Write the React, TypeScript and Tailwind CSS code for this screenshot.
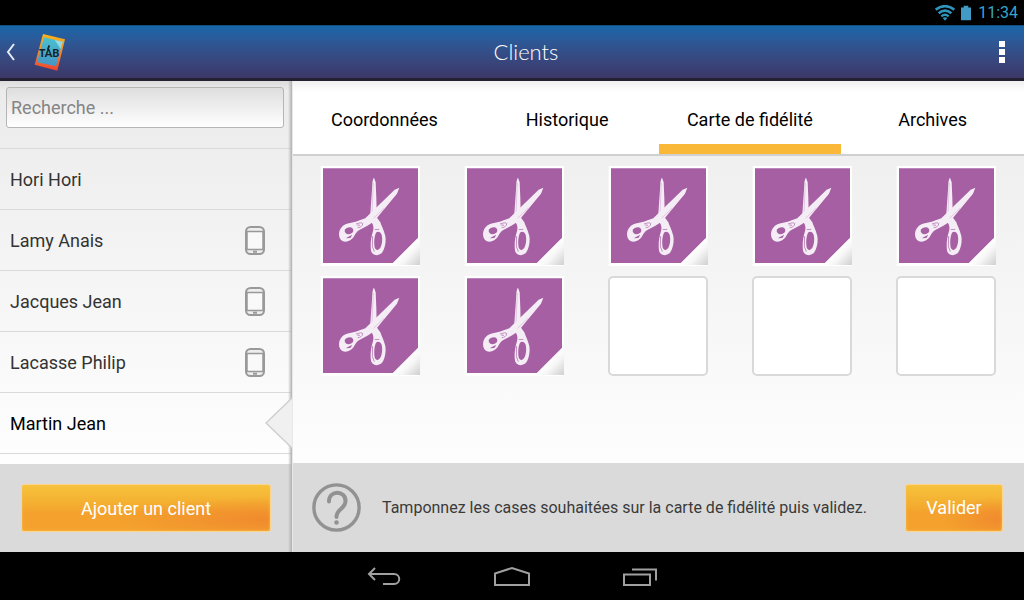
import { useState } from "react";

const clients = [
  { name: "Hori Hori", phone: false },
  { name: "Lamy Anais", phone: true },
  { name: "Jacques Jean", phone: true },
  { name: "Lacasse Philip", phone: true },
  { name: "Martin Jean", phone: false },
];

const tabs = ["Coordonnées", "Historique", "Carte de fidélité", "Archives"];

function StatusBar() {
  return (
    <div className="flex h-[25px] shrink-0 items-center justify-end bg-black pr-[6px] text-[#33a5d0]">
      <svg className="mr-[6px] h-4 w-5" viewBox="0 0 60 48" fill="none" stroke="#2f93bc" strokeWidth="8">
        <path d="M2 14 Q30 -7 58 14" />
        <path d="M11 25 Q30 9 49 25" />
        <path d="M19 34 Q30 24 41 34" strokeWidth="7" />
        <path d="M23 39 Q30 34 37 39 L30 47 Z" fill="#2f93bc" stroke="none" />
      </svg>
      <svg className="mr-[7px] h-4 w-[10px]" viewBox="0 0 11 16" fill="#429bc4">
        <path d="M3 0h5v2h3v14H0V2h3z" />
      </svg>
      <span className="text-[16px] leading-[25px]">11:34</span>
    </div>
  );
}

function TabLogo() {
  return (
    <svg className="h-[38px] w-[32px]" viewBox="0 0 96 114">
      <defs>
        <linearGradient id="frame" x1="0" y1="0" x2="0" y2="1">
          <stop offset="0" stopColor="#fdb515" />
          <stop offset="0.5" stopColor="#f58a2b" />
          <stop offset="1" stopColor="#ee4030" />
        </linearGradient>
        <linearGradient id="glass" x1="0" y1="0" x2="0" y2="1">
          <stop offset="0" stopColor="#4bc0cf" />
          <stop offset="1" stopColor="#4695c4" />
        </linearGradient>
      </defs>
      <path d="M27 3 L93 19 L70 113 L2 95 Z" fill="url(#frame)" />
      <path d="M30 13 L86 26 L66 100 L9 88 Z" fill="url(#glass)" />
      <path d="M62 21 L86 26 L80 48 Z" fill="#a9e0e8" opacity="0.8" />
      <path d="M41 50 L46 37" stroke="#14222c" strokeWidth="5" />
      <text x="15" y="71" fontFamily="Lato, sans-serif" fontWeight="900" fontSize="32" fill="#14222c">
        TAB
      </text>
    </svg>
  );
}

function PhoneIcon() {
  return (
    <svg className="h-[29px] w-[20px]" viewBox="0 0 20 29" fill="none" stroke="#999" strokeWidth="2">
      <rect x="1" y="1" width="18" height="27" rx="4.5" fill="#eee" />
      <path d="M2 5.500 H18 V23.500 H2 Z" fill="#f9f9f9" strokeWidth="1.500" />
      <path d="M8 25.700 H12" />
    </svg>
  );
}

function Scissors() {
  return (
    <svg className="block h-full w-full" viewBox="30 33 300 300" aria-hidden="true">
      <defs>
        <linearGradient id="fold" gradientUnits="userSpaceOnUse" x1="284" y1="286" x2="330" y2="330">
          <stop offset="0" stopColor="#ffffff" />
          <stop offset="0.35" stopColor="#f6f6f6" />
          <stop offset="1" stopColor="#cfcfcf" />
        </linearGradient>
      </defs>
      <path d="M32 33 H330 V333 H32 Z" fill="#fff" />
      <path d="M39 40 H324 V249 L249 324 H39 Z" fill="#a65fa3" />
      <path d="M330 243 V330 H243 Z" fill="url(#fold)" />
      <g fill="#f5edf6">
        <path d="M192 68 C187 72 187 88 186 104 L180 190 L200 178 L199 130 L197 82 Z" />
        <path d="M268 98 L254 104 L182 174 L166 190 L145 197 C132 203 108 202 96 215 C84 227 84 250 97 258 C110 264 124 256 131 246 C136 238 138 231 148 225 L172 212 L193 199 L208 180 L261 116 Z" />
        <path d="M181 199 C190 207 192 216 189 229 C182 250 180 276 184 290 C190 304 209 303 217 292 C227 277 229 252 225 239 C220 223 214 211 211 202 L200 187 Z" />
      </g>
      <g fill="#a65fa3">
        <ellipse cx="117" cy="227" rx="13" ry="10" transform="rotate(-15 117 227)" />
        <path d="M198 233 C203 227 212 230 215 239 C219 256 215 276 207 283 C199 288 193 282 193 270 C192 258 193 243 198 233 Z" />
        <path d="M107 250 L121 242 L127 240 L121 249 Z" />
      </g>
      <g fill="none" stroke="#b47cb4" strokeWidth="2.500">
        <path d="M138 207 C150 203 160 202 158 207 C157 214 150 218 143 218 M141 210 L150 211" />
        <path d="M194 224 L208 223 M188 243 L187 274 L193 290" />
        <path d="M190 190 L222 160 M190 84 L186 170" strokeWidth="1" />
      </g>
    </svg>
  );
}

const orangeButton =
  "rounded-[3px] border border-[#fbd58c] bg-[radial-gradient(ellipse_at_100%_75%,#f08a2e_0%,#f08a2e00_45%),linear-gradient(#f6c33b,#f4ac30_45%,#f4a22d_60%,#f4a22d)] text-[18px] text-white shadow-[inset_0_0_3px_#f8bd4f]";

export default function App() {
  const [activeTab, setActiveTab] = useState(2);
  const [stamps, setStamps] = useState(7);
  const [selected, setSelected] = useState(4);

  return (
    <div className="flex min-h-screen flex-col bg-black font-[Roboto,sans-serif]">
      <StatusBar />
      <header className="grid h-14 shrink-0 grid-cols-[1fr_auto_1fr] items-center border-t border-b-[3px] border-t-[#124f80] border-b-[#242130] bg-linear-to-b from-[#1766aa] to-[#3c3768]">
        <div className="flex items-center pl-[6px]">
          <button aria-label="Retour" className="flex items-center gap-[19px]">
            <svg className="h-[18px] w-[9px]" viewBox="0 0 9 18" fill="none" stroke="#e8edf5" strokeWidth="2">
              <path d="M8 1 L2 9 L8 17" />
            </svg>
            <TabLogo />
          </button>
        </div>
        <h1 className="pl-7 font-[Lato,sans-serif] text-[22px] leading-6 font-light text-white">Clients</h1>
        <button aria-label="Menu" className="mr-[19px] flex flex-col gap-[2px] justify-self-end">
          <span className="size-[6px] bg-white" />
          <span className="size-[6px] bg-white" />
          <span className="size-[6px] bg-white" />
        </button>
      </header>

      <div className="flex flex-1">
        <aside className="relative flex w-[293px] shrink-0 flex-col border-r border-[#e8e8e8] bg-linear-to-b from-[#ebebeb] to-[#fefefe] to-80%">
          <div className="bg-linear-to-b from-[#dcdcdc] to-transparent to-20% px-[6px] pt-[6px] pr-2">
            <input
              type="search"
              aria-label="Recherche"
              placeholder="Recherche ..."
              className="block h-[41px] w-full rounded-[3px] border border-[#b5b5b5] bg-linear-to-b from-[#dedede] to-white px-1 text-[18px] text-[#333] outline-none placeholder:text-[#858585]"
            />
          </div>
          <ul className="flex-1">
            <li className="h-[21px] border-b border-[#dadada]" />
            {clients.map((client, i) => (
              <li key={client.name} className="relative border-b border-[#dadada]">
                <button
                  onClick={() => setSelected(i)}
                  className={
                    "flex h-[60px] w-full items-center justify-between pr-[27px] pl-[10px] text-left text-[18px] " +
                    (i === selected ? "text-black" : "text-[#333]")
                  }
                >
                  {client.name}
                  {client.phone && <PhoneIcon />}
                </button>
                {i === selected && (
                  <svg className="absolute top-[4px] right-0 z-10 h-[52px] w-[27px]" viewBox="0 0 27 52">
                    <path d="M27 1 L1 26 L27 51" fill="#f0f0f0" stroke="#cfcfcf" strokeWidth="1.500" />
                  </svg>
                )}
              </li>
            ))}
          </ul>
          <div className="bg-[#dadada] px-[21px] py-5">
            <button className={`${orangeButton} block h-12 w-full`}>Ajouter un client</button>
          </div>
          <div className="pointer-events-none absolute inset-y-0 right-0 w-1 bg-linear-to-r from-transparent to-[#b0b0b0]" />
        </aside>

        <main className="flex min-w-0 flex-1 flex-col bg-linear-to-b from-[#ececec] to-[#fdfdfd] to-80%">
          <nav className="flex h-[75px] border-b-2 border-[#d0d0d0] bg-linear-to-b from-[#f0f0f0] to-white to-15%">
            {tabs.map((tab, i) => (
              <button
                key={tab}
                onClick={() => setActiveTab(i)}
                className={
                  "flex-1 border-b-10 pt-[13px] text-[18px] text-black " +
                  (i === activeTab ? "border-[#f9b837]" : "border-transparent")
                }
              >
                {tab}
              </button>
            ))}
          </nav>
          <div className="grid flex-1 grid-cols-5 content-start justify-items-center gap-y-[10px] pt-[10px] pr-[6px] pl-[5px]">
            {Array.from({ length: 10 }, (_, i) => (
              <button
                key={i}
                aria-label={`Case ${i + 1}`}
                onClick={() => setStamps(i + 1)}
                className={
                  i < stamps ? "size-[100px]" : "size-[100px] rounded-[5px] border-2 border-[#d9d9d9] bg-white"
                }
              >
                {i < stamps && <Scissors />}
              </button>
            ))}
          </div>
          <footer className="flex items-center bg-[#dadada] py-5 pr-[21px] pl-[19px]">
            <svg className="h-[49px] w-[49px] shrink-0" viewBox="0 0 49 49" fill="none" stroke="#929292">
              <circle cx="24.500" cy="24.500" r="22.600" strokeWidth="3.400" />
              <path
                d="M17 18.500 C17 7 33.500 7 33.500 18 C33.500 26 24.500 25.500 24.500 34"
                strokeWidth="4"
                strokeLinecap="round"
              />
              <circle cx="24.500" cy="39.500" r="2.300" fill="#929292" stroke="none" />
            </svg>
            <p className="flex-1 pl-[21px] text-[16px] text-[#3a3a3a]">
              Tamponnez les cases souhaitées sur la carte de fidélité puis validez.
            </p>
            <button className={`${orangeButton} h-12 w-[98px] shrink-0`}>Valider</button>
          </footer>
        </main>
      </div>

      <nav className="flex h-12 shrink-0 items-center justify-center gap-[93px] bg-black">
        <button aria-label="Précédent">
          <svg className="h-[20px] w-[34px]" viewBox="0 0 34 20" fill="none" stroke="#a0a0a0" strokeWidth="2">
            <path d="M8 2 L2 8 L8 14 M2 8 H27 C34 8 34 18 27 18 H16" />
          </svg>
        </button>
        <button aria-label="Accueil">
          <svg className="h-[20px] w-[36px]" viewBox="0 0 36 20" fill="none" stroke="#a0a0a0" strokeWidth="2">
            <path d="M1 19 V7.500 L18 2 L35 7.500 V19 Z" />
          </svg>
        </button>
        <button aria-label="Applications récentes">
          <svg className="h-[20px] w-[34px]" viewBox="0 0 34 20" fill="none" stroke="#a0a0a0" strokeWidth="2">
            <path d="M1 8.500 H27 V19 H1 Z M9 3.500 H33 V14.500" />
          </svg>
        </button>
      </nav>
    </div>
  );
}
